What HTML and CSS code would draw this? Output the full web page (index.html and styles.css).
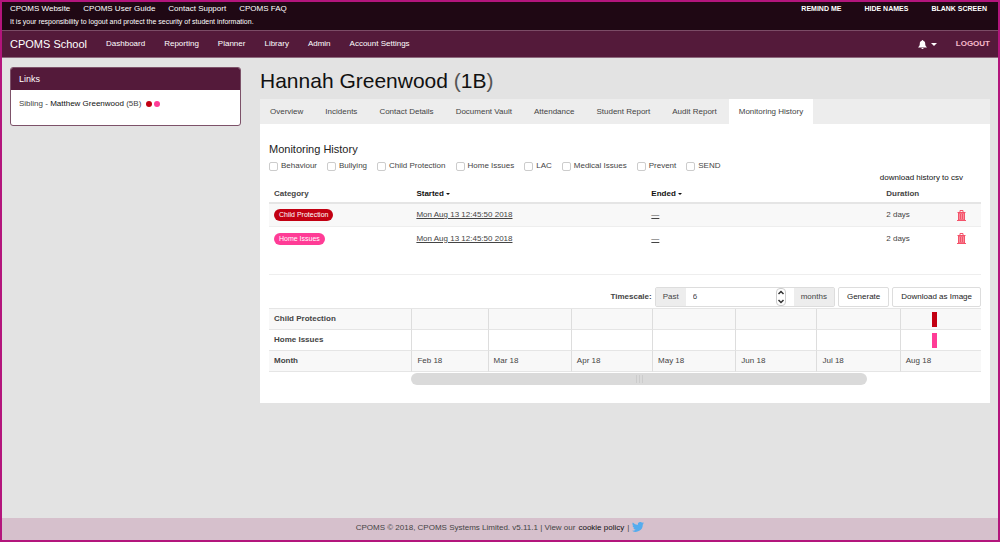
FILE: index.html
```html
<!DOCTYPE html>
<html lang="en">

<head>
    <meta charset="UTF-8">
    <meta name="viewport" content="width=device-width, initial-scale=1.0">
    <title>CPOMS School</title>
    <link rel="stylesheet" href="styles.css">
</head>

<body>
    <header>
        <div class="topbar">
            <div>
                <div class="top-links">
                    <a href="#">CPOMS Website</a>
                    <a href="#">CPOMS User Guide</a>
                    <a href="#">Contact Support</a>
                    <a href="#">CPOMS FAQ</a>
                </div>
                <p class="notice">It is your responsibility to logout and protect the security of student information.</p>
            </div>
            <div class="top-actions">
                <a href="#">REMIND ME</a>
                <a href="#">HIDE NAMES</a>
                <a href="#">BLANK SCREEN</a>
            </div>
        </div>

        <nav class="navbar">
            <a class="brand" href="#">CPOMS School</a>
            <a href="#">Dashboard</a>
            <a href="#">Reporting</a>
            <a href="#">Planner</a>
            <a href="#">Library</a>
            <a href="#">Admin</a>
            <a href="#">Account Settings</a>
            <button type="button" class="bell" aria-label="Notifications">
                <svg width="9" height="9" viewBox="0 0 18 18" fill="#fff"><path d="M9 0c-1 0-1.500.7-1.500 1.600C4.800 2.300 3.600 4.400 3.600 7c0 4-1 5.500-3.100 7.200V15h17v-.8C15.400 12.500 14.400 11 14.400 7c0-2.600-1.200-4.700-3.900-5.400C10.500.7 10 0 9 0zM6.800 16a2.200 2 0 0 0 4.400 0z"/></svg>
                <span class="caret"></span>
            </button>
            <a class="logout" href="#">LOGOUT</a>
        </nav>
    </header>

    <div class="container">
        <aside class="sidebar">
            <div class="links-panel">
                <h2>Links</h2>
                <p>Sibling - <a href="#">Matthew Greenwood</a> (5B)
                    <span class="dot red"></span><span class="dot pink"></span></p>
            </div>
        </aside>

        <main>
            <h1>Hannah Greenwood <span class="bracket">(</span>1B<span class="bracket">)</span></h1>

            <div class="tabs">
                <a href="#">Overview</a>
                <a href="#">Incidents</a>
                <a href="#">Contact Details</a>
                <a href="#">Document Vault</a>
                <a href="#">Attendance</a>
                <a href="#">Student Report</a>
                <a href="#">Audit Report</a>
                <a href="#" class="active">Monitoring History</a>
            </div>

            <div class="content">
                <h3>Monitoring History</h3>
                <div class="filters">
                    <label><input type="checkbox">Behaviour</label>
                    <label><input type="checkbox">Bullying</label>
                    <label><input type="checkbox">Child Protection</label>
                    <label><input type="checkbox">Home Issues</label>
                    <label><input type="checkbox">LAC</label>
                    <label><input type="checkbox">Medical Issues</label>
                    <label><input type="checkbox">Prevent</label>
                    <label><input type="checkbox">SEND</label>
                </div>
                <div class="download"><a href="#">download history to csv</a></div>

                <table class="history">
                    <colgroup>
                        <col class="col-category"><col class="col-date"><col class="col-date"><col class="col-duration"><col>
                    </colgroup>
                    <thead>
                        <tr>
                            <th>Category</th>
                            <th class="sort">Started <span class="caret"></span></th>
                            <th class="sort">Ended <span class="caret"></span></th>
                            <th>Duration</th>
                            <th></th>
                        </tr>
                    </thead>
                    <tbody>
                        <tr>
                            <td><span class="badge red">Child Protection</span></td>
                            <td><a href="#">Mon Aug 13 12:45:50 2018</a></td>
                            <td><a href="#">—</a></td>
                            <td>2 days</td>
                            <td><button type="button" class="delete" aria-label="Delete"><svg width="9" height="11" viewBox="0 0 18 22" fill="none" stroke="#f4536a" stroke-width="2"><path d="M6 4V1h6v3M1 5h16M0 21h18"/><path d="M3 6h12v14H3z" fill="#f98c9b"/><path d="M7 8v10M11 8v10"/></svg></button></td>
                        </tr>
                        <tr>
                            <td><span class="badge pink">Home Issues</span></td>
                            <td><a href="#">Mon Aug 13 12:45:50 2018</a></td>
                            <td><a href="#">—</a></td>
                            <td>2 days</td>
                            <td><button type="button" class="delete" aria-label="Delete"><svg width="9" height="11" viewBox="0 0 18 22" fill="none" stroke="#f4536a" stroke-width="2"><path d="M6 4V1h6v3M1 5h16M0 21h18"/><path d="M3 6h12v14H3z" fill="#f98c9b"/><path d="M7 8v10M11 8v10"/></svg></button></td>
                        </tr>
                    </tbody>
                </table>

                <hr>

                <form class="timescale">
                    <label for="months">Timescale:</label>
                    <div class="input-group">
                        <span class="addon">Past</span>
                        <div class="number">
                            <input type="number" id="months" value="6">
                            <svg width="10" height="18" viewBox="0 0 20 36" fill="none"><rect x="1" y="1" width="18" height="34" rx="7" fill="#fff" stroke="#ccc" stroke-width="2"/><path d="M5 12l5-5 5 5M5 24l5 5 5-5" stroke="#333" stroke-width="3"/></svg>
                        </div>
                        <span class="addon">months</span>
                    </div>
                    <button type="button" class="button">Generate</button>
                    <button type="button" class="button">Download as Image</button>
                </form>

                <table class="timeline">
                    <colgroup>
                        <col class="col-label"><col class="col-feb"><col class="col-long"><col class="col-short"><col class="col-long"><col class="col-short"><col class="col-long"><col>
                    </colgroup>
                    <tr>
                        <th>Child Protection</th>
                        <td></td><td></td><td></td><td></td><td></td><td></td>
                        <td><span class="event red" style="margin-left: 37%"></span></td>
                    </tr>
                    <tr>
                        <th>Home Issues</th>
                        <td></td><td></td><td></td><td></td><td></td><td></td>
                        <td><span class="event pink" style="margin-left: 37%"></span></td>
                    </tr>
                    <tr>
                        <th>Month</th>
                        <td>Feb 18</td>
                        <td>Mar 18</td>
                        <td>Apr 18</td>
                        <td>May 18</td>
                        <td>Jun 18</td>
                        <td>Jul 18</td>
                        <td>Aug 18</td>
                    </tr>
                </table>
                <div class="scroll-track">
                    <div class="scroll-thumb"><span></span><span></span><span></span></div>
                </div>
            </div>
        </main>
    </div>

    <footer>
        CPOMS © 2018, CPOMS Systems Limited. v5.11.1 | View our <a href="#">cookie policy</a> |
        <a href="#" aria-label="Twitter"><svg width="12" height="10" viewBox="0 0 24 20" fill="#55acee"><path d="M24 2.400a10 10 0 0 1-2.800.8A5 5 0 0 0 23.300.5a10 10 0 0 1-3.100 1.200 4.900 4.900 0 0 0-8.400 4.500A14 14 0 0 1 1.700 1a4.900 4.900 0 0 0 1.500 6.600 5 5 0 0 1-2.200-.6 4.900 4.900 0 0 0 3.900 4.900 5 5 0 0 1-2.200.1 4.900 4.900 0 0 0 4.600 3.400A10 10 0 0 1 0 17.400a14 14 0 0 0 21.500-12.500A10 10 0 0 0 24 2.400z"/></svg></a>
    </footer>
</body>

</html>
```

FILE: styles.css
```css
* {
    box-sizing: border-box;
}

body {
    font-family: "Liberation Sans", Arial, sans-serif;
    font-size: 8px;
    line-height: 12px;
    color: #444;
    margin: 0;
    min-height: 100vh;
    display: flex;
    flex-direction: column;
    background-color: #e3e3e3;
    border: 2px solid #b3157c;
}

a {
    color: #111;
    text-decoration: none;
}

h1,
h2,
h3,
p {
    margin: 0;
}

button,
input {
    font: inherit;
    color: inherit;
}

svg {
    display: block;
}

.red {
    background-color: #c20012;
}

.pink {
    background-color: #ff3c96;
}

.caret {
    display: inline-block;
    border-left: 2px solid transparent;
    border-right: 2px solid transparent;
    border-top: 2px solid;
    vertical-align: middle;
}

/* Header */
.topbar {
    display: flex;
    justify-content: space-between;
    padding: 1px 11px 0 8px;
    height: 28px;
    background-color: #1f0814;
    color: white;
}

.topbar a,
.navbar a {
    color: white;
}

.top-links {
    display: flex;
    gap: 13px;
}

.notice {
    font-size: 7px;
    line-height: 14px;
}

.top-actions {
    display: flex;
    gap: 23px;
    font-size: 7px;
    font-weight: bold;
}

.navbar {
    display: flex;
    align-items: center;
    gap: 19px;
    height: 28px;
    padding: 0 8px;
    background-color: #541a3a;
    border-top: 1px solid #7b4c66;
    border-bottom: 1px solid #8d6a7d;
}

.navbar .brand {
    font-size: 11px;
}

.bell {
    display: flex;
    align-items: center;
    gap: 4px;
    margin-left: auto;
    padding: 0;
    border: none;
    background: none;
    color: white;
}

.bell .caret {
    border-width: 3px 3px 0;
}

.navbar .logout {
    color: #f7b9cb;
    font-weight: bold;
}

/* Page columns */
.container {
    display: flex;
    flex: 1;
    padding-top: 9px;
}

.sidebar {
    width: 25%;
    padding: 0 10px 0 8px;
}

main {
    width: 75%;
    padding: 0 8px 0 9px;
}

.links-panel {
    border: 1px solid #7d5269;
    border-radius: 3px;
    overflow: hidden;
    background-color: white;
}

.links-panel h2 {
    padding: 0 8px;
    font-size: 9px;
    line-height: 22px;
    background-color: #541a3a;
    color: white;
    font-weight: normal;
}

.links-panel p {
    padding: 8px 8px 15px;
}

.dot {
    display: inline-block;
    width: 6px;
    height: 6px;
    margin-left: 2px;
    border-radius: 50%;
    vertical-align: middle;
}

h1 {
    margin-bottom: 4px;
    font-size: 21px;
    line-height: 28px;
    font-weight: normal;
    color: #111;
}

.bracket {
    color: #555;
}

.tabs {
    display: flex;
    gap: 2px;
    background-color: #ededed;
}

.tabs a {
    padding: 0 10px;
    line-height: 25px;
    color: #444;
}

.tabs .active {
    background-color: white;
}

.content {
    padding: 17px 9px 18px;
    background-color: white;
}

h3 {
    font-size: 11px;
    line-height: 16px;
    font-weight: normal;
    color: #222;
}

.filters {
    display: flex;
    gap: 10px;
    margin-top: 3px;
}

.filters label {
    display: flex;
    align-items: center;
    gap: 3px;
}

.filters input {
    appearance: none;
    width: 9px;
    height: 9px;
    margin: 0;
    border: 1px solid #ccc;
    border-radius: 2px;
    background-color: white;
}

.download {
    padding-right: 18px;
    text-align: right;
}

/* Monitoring history */
table {
    width: 100%;
    border-collapse: separate;
    border-spacing: 0;
    table-layout: fixed;
}

th {
    text-align: left;
}

.col-category,
.col-label {
    width: 20%;
}

.col-date {
    width: 33%;
}

.col-duration {
    width: 10%;
}

.history th {
    padding: 4px 5px 2px;
    border-bottom: 2px solid #e5e5e5;
}

.history .sort {
    color: #111;
}

.history td {
    height: 23px;
    padding: 0 5px;
    border-bottom: 1px solid #eee;
}

.history tbody tr:nth-child(odd) {
    background-color: #f8f8f8;
}

.history tbody tr:last-child td {
    border-bottom: none;
}

.history td a {
    color: #444;
    text-decoration: underline;
}

.badge {
    display: inline-block;
    padding: 0 5px;
    border-radius: 6px;
    font-size: 7px;
    color: white;
}

.delete {
    display: block;
    padding: 0;
    border: none;
    background: none;
}

hr {
    margin: 24px 0 12px;
    border: none;
    border-top: 1px solid #eee;
}

/* Timescale */
.timescale {
    display: flex;
    justify-content: flex-end;
    align-items: center;
    gap: 3px;
    height: 20px;
}

.timescale label {
    font-weight: bold;
}

.input-group {
    display: flex;
    height: 20px;
    border: 1px solid #ddd;
    border-radius: 2px;
    line-height: 18px;
}

.addon {
    padding: 0 7px;
    background-color: #ededed;
}

.number {
    display: flex;
    width: 108px;
    padding-right: 8px;
    background-color: white;
}

.number input {
    appearance: textfield;
    flex: 1;
    min-width: 0;
    padding: 0 7px;
    border: none;
    background: none;
}

.number input::-webkit-inner-spin-button {
    display: none;
}

.button {
    height: 20px;
    padding: 0 8px;
    border: 1px solid #ddd;
    border-radius: 2px;
    background-color: white;
    color: #222;
}

/* Timeline chart */
.timeline {
    margin-top: 1px;
    border-top: 1px solid #e5e5e5;
}

.col-feb {
    width: 10.7%;
}

.col-short {
    width: 11.4%;
}

.col-long {
    width: 11.7%;
}

.timeline th,
.timeline td {
    height: 21px;
    padding: 0 5px;
    border-bottom: 1px solid #e5e5e5;
}

.timeline td {
    border-left: 1px solid #ddd;
}

.timeline tr:nth-child(odd) {
    background-color: #f8f8f8;
}

.event {
    display: block;
    width: 5px;
    height: 15px;
}

.scroll-track {
    margin: 1px 0 0 20%;
}

.scroll-thumb {
    display: flex;
    justify-content: center;
    align-items: center;
    gap: 2px;
    width: 80%;
    height: 12px;
    border-radius: 6px;
    background-color: #dadada;
}

.scroll-thumb span {
    width: 1px;
    height: 8px;
    background-color: #ccc;
}

footer {
    display: flex;
    justify-content: center;
    gap: 3px;
    padding: 4px 0 6px;
    background-color: #d6c0cc;
}
```
